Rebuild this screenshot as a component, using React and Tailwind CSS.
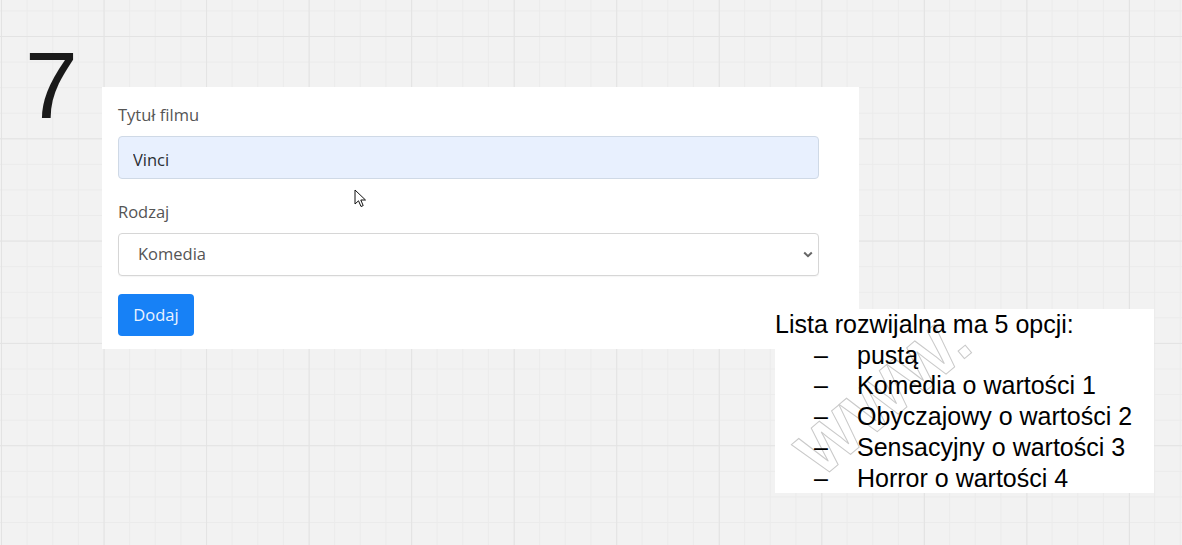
import { useState } from "react";

const options = [
  { value: "", label: "" },
  { value: "1", label: "Komedia" },
  { value: "2", label: "Obyczajowy" },
  { value: "3", label: "Sensacyjny" },
  { value: "4", label: "Horror" },
];

const notes = [
  "pustą",
  "Komedia o wartości 1",
  "Obyczajowy o wartości 2",
  "Sensacyjny o wartości 3",
  "Horror o wartości 4",
];

function Cursor() {
  return (
    <svg
      width="13"
      height="19"
      viewBox="0 0 13 19"
      className="absolute left-[354px] top-[189px]"
    >
      <path
        d="M1 1 L1 15 L4.5 11.8 L7 17.5 L9.2 16.6 L6.8 11 L11.5 11 Z"
        fill="#fff"
        stroke="#111"
        strokeWidth="1"
        strokeLinejoin="round"
      />
    </svg>
  );
}

function MovieForm() {
  const [title, setTitle] = useState("Vinci");
  const [kind, setKind] = useState("1");

  return (
    <form
      onSubmit={(e) => e.preventDefault()}
      className="mt-[87px] w-[757px] bg-white px-4 pt-4 pb-[13px] font-['Open_Sans',sans-serif] text-[16.5px]"
    >
      <label htmlFor="tytul" className="block leading-[24px] text-[#555] mb-[9px]">
        Tytuł filmu
      </label>
      <input
        id="tytul"
        value={title}
        onChange={(e) => setTitle(e.target.value)}
        className="block w-[701px] h-[43px] rounded-[4px] border border-[#cfd9e6] bg-[#e8f0fe] pl-[14px] pt-[4px] text-[#2a2e33] outline-none"
      />

      <label htmlFor="rodzaj" className="block leading-[24px] text-[#555] mt-[21px] mb-[9px]">
        Rodzaj
      </label>
      <div className="relative w-[701px]">
        <select
          id="rodzaj"
          value={kind}
          onChange={(e) => setKind(e.target.value)}
          className="block w-full h-[43px] appearance-none rounded-[4px] border border-[#d6d6d6] bg-white pl-[19px] text-[#555] outline-none shadow-[0_1px_1px_rgba(0,0,0,0.04)]"
        >
          {options.map((o) => (
            <option key={o.value} value={o.value}>
              {o.label}
            </option>
          ))}
        </select>
        {/* chevron */}
        <svg
          width="10"
          height="7"
          viewBox="0 0 10 7"
          className="pointer-events-none absolute right-[6px] top-[18px]"
        >
          <path d="M1.2 1.5 L5 5.2 L8.8 1.5" fill="none" stroke="#666" strokeWidth="2" />
        </svg>
      </div>

      <button
        type="submit"
        className="mt-[18px] h-[42px] w-[76px] rounded-[4px] bg-[#1781f6] text-[#eaf3ff] font-medium"
      >
        Dodaj
      </button>
    </form>
  );
}

function Note() {
  return (
    <div className="absolute left-[775px] top-[309px] w-[379px] h-[184px] overflow-hidden bg-white font-['Liberation_Sans',Arial,sans-serif] text-[25px] leading-[30.7px] text-black">
      {/* watermark */}
      <span
        aria-hidden="true"
        className="absolute left-[108px] top-[88px] -translate-x-1/2 -translate-y-1/2 rotate-[-40deg] whitespace-nowrap font-bold text-[66px] leading-none text-transparent [-webkit-text-stroke:1px_#c9c9c9]"
      >
        WWW.
      </span>
      <div className="relative">
        <p>Lista rozwijalna ma 5 opcji:</p>
        <ul>
          {notes.map((n) => (
            <li key={n} className="flex">
              <span className="ml-[39px] w-[43px]">–</span>
              <span>{n}</span>
            </li>
          ))}
        </ul>
      </div>
    </div>
  );
}

export default function App() {
  return (
    <div className="relative w-[1182px] h-[545px] overflow-hidden bg-[#f2f2f2] bg-[linear-gradient(to_right,#e3e3e3_1px,transparent_1px),linear-gradient(to_bottom,#e3e3e3_1px,transparent_1px),linear-gradient(to_right,#ebebeb_1px,transparent_1px),linear-gradient(to_bottom,#ebebeb_1px,transparent_1px)] bg-[size:102.55px_102.3px,102.55px_102.3px,25.64px_25.58px,25.64px_25.58px] bg-[position:1px_36px,1px_36px,1px_36px,1px_36px]">
      <div className="flex items-start pl-[25px]">
        <div className="w-[77px] mt-[38px] font-['Liberation_Sans',Arial,sans-serif] text-[95px] leading-none text-[#1a1a1a]">
          7
        </div>
        <MovieForm />
      </div>
      <Cursor />
      <Note />
    </div>
  );
}
